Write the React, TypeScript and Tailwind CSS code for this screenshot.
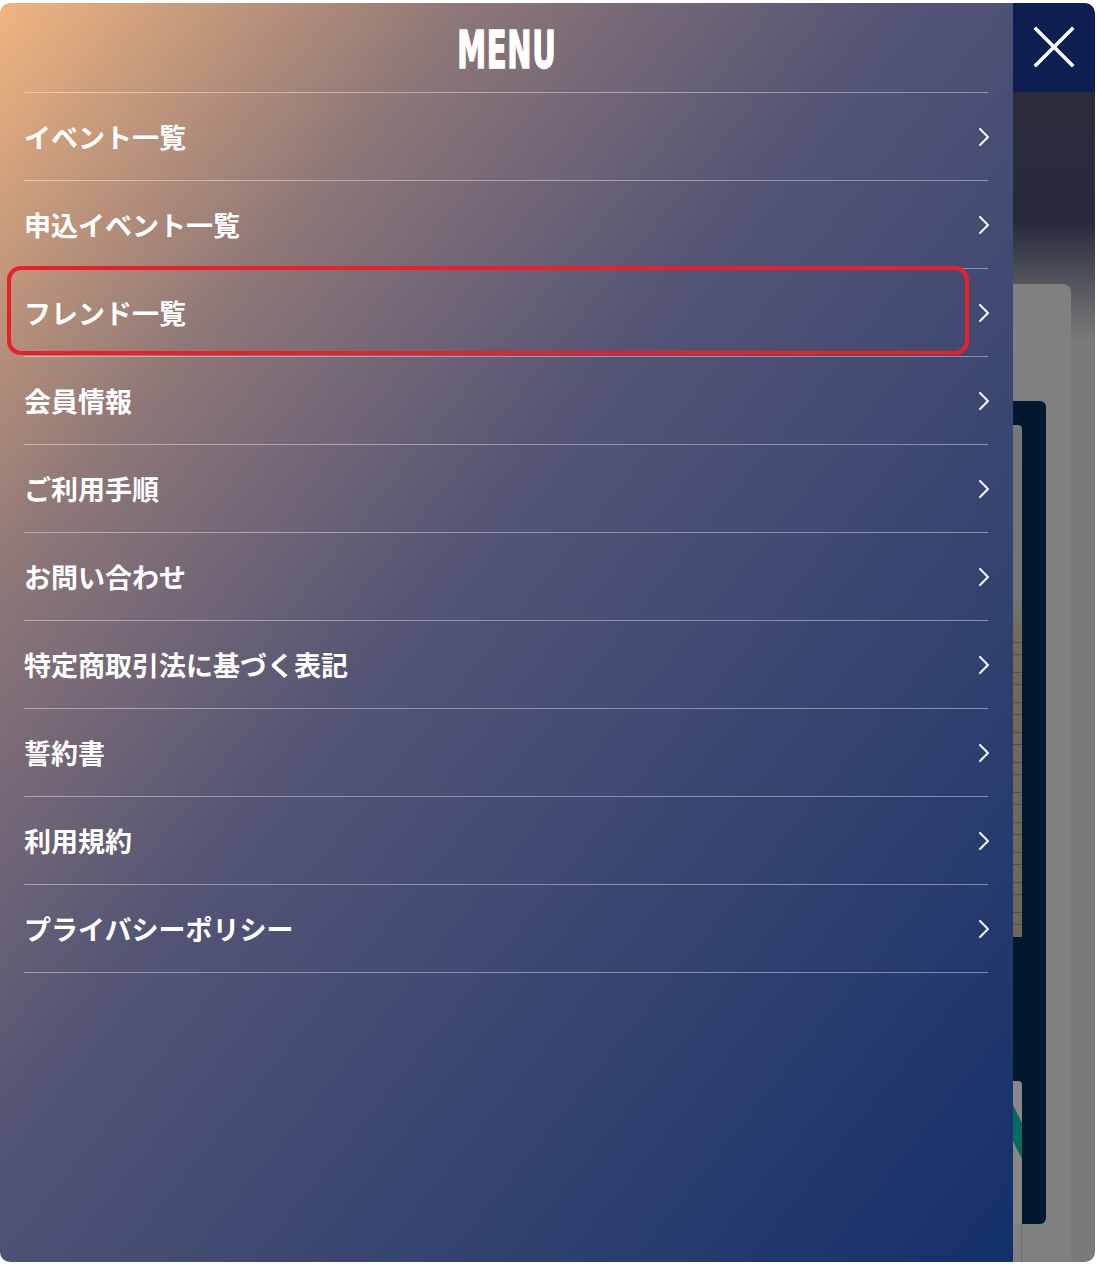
import { ChevronRight } from 'lucide-react';

const MENU_ITEMS = [
  'イベント一覧',
  '申込イベント一覧',
  'フレンド一覧',
  '会員情報',
  'ご利用手順',
  'お問い合わせ',
  '特定商取引法に基づく表記',
  '誓約書',
  '利用規約',
  'プライバシーポリシー',
];

function MenuRow({ label, highlighted }: { label: string; highlighted?: boolean }) {
  return (
    <li className="relative flex h-[88px] items-center justify-between border-t border-white/40">
      <span className="text-[27px] font-bold leading-none text-white">{label}</span>
      <ChevronRight size={32} strokeWidth={1.5} className="-mr-[12px] text-white" />
      {highlighted && (
        <div className="pointer-events-none absolute -left-[17px] right-[19px] -top-[3px] bottom-[1px] rounded-[14px] border-[4px] border-[#e8202a]" />
      )}
    </li>
  );
}

// the page behind the overlay, dimmed
function BackdropPage() {
  return (
    <div className="flex w-[82px] flex-col">
      <div className="flex h-[89px] items-center justify-center bg-[#0e1e50]">
        <svg width="42" height="42" viewBox="0 0 42 42" className="-mt-[2px]">
          <path d="M3 3 L39 39 M39 3 L3 39" stroke="white" strokeWidth="3.6" strokeLinecap="square" />
        </svg>
      </div>
      <div className="flex flex-1 bg-[linear-gradient(to_bottom,#2a2c3b_0px,#262a3c_130px,#5a5b62_200px,#7a7a7a_250px,#7a7a7a_100%)]">
        <div className="mt-[192px] flex w-[58px] flex-col rounded-tr-[8px] bg-[#808080]">
          <div className="mt-[117px] flex h-[823px] w-[33px] flex-col rounded-r-[6px] bg-[#011830]">
            <div className="mt-[24px] h-[512px] w-[9px] rounded-tr-[4px] bg-[linear-gradient(to_bottom,#777_0%,#747372_35%,#6f6a5c_40%,#6c6759_100%)]">
              <div className="mt-[200px] h-[310px] w-full bg-[repeating-linear-gradient(to_bottom,transparent_0px,transparent_17px,#3a352a_17px,#3a352a_18px,transparent_18px,transparent_29px,#3a352a_29px,#3a352a_30px)] opacity-50" />
            </div>
            <div className="mt-[144px] w-[9px] flex-1 overflow-hidden rounded-tr-[4px] bg-[#878787]">
              <svg width="9" height="143" viewBox="0 0 9 143">
                <polygon points="0,24 9,42 9,78 0,60" fill="#046b60" />
              </svg>
            </div>
          </div>
          <div className="h-[38px] w-[9px] border-r border-[#6c6c6c]" />
        </div>
      </div>
    </div>
  );
}

export default function App() {
  return (
    <div className="h-[1264px] w-[1097px] bg-white pt-[3px] pr-[2px] pb-[2px]">
      <div
        className="flex h-full overflow-hidden rounded-[10px]"
        style={{ fontFamily: "'Noto Sans CJK JP', 'Noto Sans', sans-serif" }}
      >
        <div className="flex w-[1013px] flex-col bg-[linear-gradient(to_bottom_right,#f0b47f_0%,#8e7777_23%,#545575_44%,#13306b_100%)]">
          <div className="flex h-[89px] items-center justify-center pt-[4px]">
            <span className="inline-block origin-center scale-x-[0.62] font-['DejaVu_Sans_Condensed',sans-serif] text-[52px] font-bold leading-none tracking-[1px] text-white [-webkit-text-stroke:1.5px_white]">
              MENU
            </span>
          </div>
          <ul className="ml-[24px] mr-[25px] border-b border-white/40">
            {MENU_ITEMS.map((label, i) => (
              <MenuRow key={label} label={label} highlighted={i === 2} />
            ))}
          </ul>
        </div>
        <BackdropPage />
      </div>
    </div>
  );
}
